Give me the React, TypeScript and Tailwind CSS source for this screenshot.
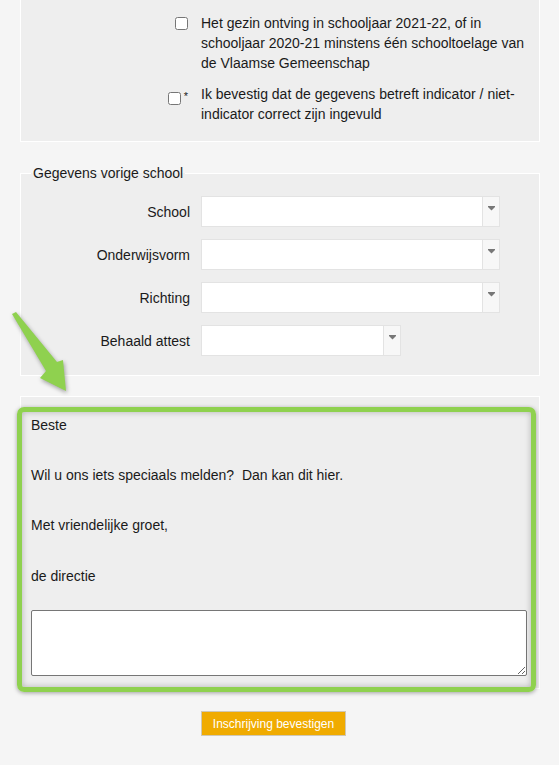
import React from "react";

function Select({ width }: { width: number }) {
  return (
    <div
      className="flex h-[31px] border border-[#e3e3e3] bg-white"
      style={{ width }}
    >
      <div className="flex-1" />
      <div className="flex w-[17px] justify-center border-l border-[#e3e3e3] bg-[#f7f7f7] pt-[9px]">
        <svg width="7" height="5" viewBox="0 0 7 5">
          <path d="M0 0H7V1L3.5 4.5L0 1Z" fill="#777" />
        </svg>
      </div>
    </div>
  );
}

function Row({ label, width }: { label: string; width: number }) {
  return (
    <div className="flex h-[31px] items-center">
      <div className="w-[169px] text-right leading-[20px]">{label}</div>
      <div className="ml-[11px]">
        <Select width={width} />
      </div>
    </div>
  );
}

export default function App() {
  return (
    <div className="relative min-h-[765px] w-full overflow-hidden bg-[#f5f5f5] font-['Liberation_Sans',Arial,sans-serif] text-[14px] text-[#1a1a1a]">
      {/* Panel 1 */}
      <div className="ml-[20px] w-[520px] border-x border-b border-white bg-[#eeeeee] pt-[13px] pb-[17px]">
        <div className="flex">
          <div className="flex w-[167px] justify-end pt-[4px]">
            <input type="checkbox" className="m-0 h-[13px] w-[13px]" />
          </div>
          <div className="ml-[13px] whitespace-nowrap leading-[20px]">
            Het gezin ontving in schooljaar 2021-22, of in
            <br />
            schooljaar 2020-21 minstens één schooltoelage van
            <br />
            de Vlaamse Gemeenschap
          </div>
        </div>
        <div className="mt-[11px] flex">
          <div className="flex w-[167px] items-start justify-end pt-[8px]">
            <input type="checkbox" className="m-0 h-[13px] w-[13px]" />
            <span className="ml-[3px] -mt-[3px] text-[11px] leading-[14px]">*</span>
          </div>
          <div className="ml-[13px] whitespace-nowrap leading-[20px]">
            Ik bevestig dat de gegevens betreft indicator / niet-
            <br />
            indicator correct zijn ingevuld
          </div>
        </div>
      </div>

      {/* Panel 2 */}
      <fieldset className="ml-[20px] mt-[21px] w-[520px] border border-white bg-[#eeeeee] pb-[19px]">
        <legend className="ml-[10px] px-[2px] leading-[20px]">
          Gegevens vorige school
        </legend>
        <div className="flex flex-col gap-[12px] pt-[13px]">
          <Row label="School" width={299} />
          <Row label="Onderwijsvorm" width={299} />
          <Row label="Richting" width={299} />
          <Row label="Behaald attest" width={200} />
        </div>
      </fieldset>

      {/* Panel 3 */}
      <div className="ml-[20px] mt-[20px] w-[520px] border border-white bg-[#eeeeee] px-[10px] pt-[18px] pb-[12px]">
        <div className="leading-[20px]">Beste</div>
        <div className="mt-[30px] leading-[20px] whitespace-pre">
          Wil u ons iets speciaals melden?  Dan kan dit hier.
        </div>
        <div className="mt-[30px] leading-[20px]">Met vriendelijke groet,</div>
        <div className="mt-[31px] leading-[20px]">de directie</div>
        <textarea className="mt-[24px] block h-[66px] w-[496px] rounded-[2px] border border-[#767676] bg-white" />
      </div>

      {/* Button */}
      <div className="ml-[201px] mt-[22px]">
        <button className="h-[25px] w-[145px] border border-[#cfc7b4] bg-[#f0ab00] text-[12px] text-white">
          Inschrijving bevestigen
        </button>
      </div>

      {/* Annotation: green box */}
      <div className="pointer-events-none absolute left-[17px] top-[407px] h-[285px] w-[519px] rounded-[7px] border-[5px] border-[#8fd14f] shadow-[0_1px_4px_rgba(0,0,0,0.35),inset_0_0_6px_rgba(0,0,0,0.25)]" />

      {/* Annotation: arrow */}
      <svg
        className="pointer-events-none absolute left-0 top-[300px]"
        width="90"
        height="100"
        viewBox="0 300 90 100"
        style={{ filter: "drop-shadow(1px 2px 2px rgba(0,0,0,0.35))" }}
      >
        <polygon
          points="12,314 16,312 57,362 63,360 66,391 40,378 46,371"
          fill="#8fd14f"
        />
      </svg>
    </div>
  );
}
